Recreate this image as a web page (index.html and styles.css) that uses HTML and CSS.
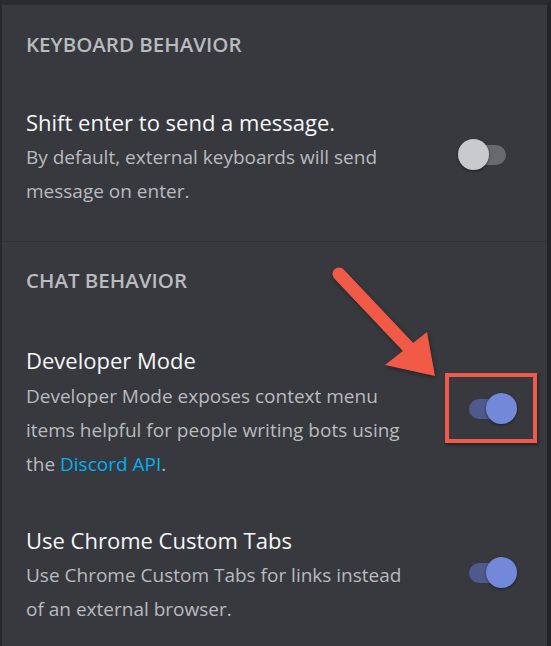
FILE: index.html
```html
<!DOCTYPE html>
<html lang="en">
<head>
  <meta charset="UTF-8">
  <meta name="viewport" content="width=device-width, initial-scale=1.0">
  <title>Behavior Settings</title>
  <link rel="stylesheet" href="styles.css">
</head>
<body>
  <div class="screen">
    <section class="group">
      <h2 class="group-title">KEYBOARD BEHAVIOR</h2>
      <div class="setting">
        <div class="setting-text">
          <h3>Shift enter to send a message.</h3>
          <p>By default, external keyboards will send<br>message on enter.</p>
        </div>
        <div class="toggle toggle-off"><span class="knob"></span></div>
      </div>
    </section>

    <section class="group group-chat">
      <h2 class="group-title">CHAT BEHAVIOR</h2>
      <div class="setting setting-dev">
        <div class="setting-text">
          <h3>Developer Mode</h3>
          <p>Developer Mode exposes context menu<br>items helpful for people writing bots using<br>the <a href="#">Discord API</a>.</p>
        </div>
        <div class="toggle toggle-on"><span class="knob"></span></div>
      </div>
      <div class="setting setting-tabs">
        <div class="setting-text">
          <h3>Use Chrome Custom Tabs</h3>
          <p>Use Chrome Custom Tabs for links instead<br>of an external browser.</p>
        </div>
        <div class="toggle toggle-on"><span class="knob"></span></div>
      </div>
    </section>

    <svg class="arrow" width="120" height="120" viewBox="0 0 120 120">
      <line x1="12" y1="12" x2="82" y2="86" stroke="#f25a48" stroke-width="13" stroke-linecap="round"/>
      <polygon points="108,114 58,103 100,70" fill="#f25a48"/>
    </svg>
    <div class="highlight"></div>
  </div>
</body>
</html>
```

FILE: styles.css
```css
body {
  margin: 0;
  background-color: #37393f;
  font-family: 'Open Sans', sans-serif;
}

.screen {
  position: relative;
  height: 646px;
  box-sizing: border-box;
  border-top: 5px solid #2b2c31;
  border-left: 2px solid #27282c;
  border-right: 4px solid #232428;
  background-color: #37393f;
  overflow: hidden;
}

.group {
  padding: 27px 0 33px 24px;
}

.group-chat {
  border-top: 1px solid #303237;
  padding-top: 26px;
}

.group-title {
  margin: 0 0 51px;
  font-size: 20.5px;
  line-height: 24px;
  font-weight: 600;
  color: #b9bbbe;
}

.setting {
  display: flex;
  align-items: center;
  justify-content: space-between;
}

.setting h3 {
  margin: 0 0 3px;
  font-size: 22px;
  line-height: 30px;
  font-weight: 400;
  color: #f6f6f7;
}

.setting p {
  margin: 0;
  font-size: 19px;
  line-height: 34px;
  color: #b9bbbe;
}

.setting p a {
  color: #00b0f4;
  text-decoration: none;
}

.setting-dev h3 {
  margin-top: 2px;
  margin-bottom: 4px;
}

.setting-tabs {
  margin-top: 44px;
}

.setting-tabs p {
  margin-top: 3px;
}

.toggle {
  position: relative;
  width: 48px;
  height: 32px;
  margin-top: -6px;
}

.toggle::before {
  content: "";
  position: absolute;
  top: 6px;
  height: 20px;
  width: 40px;
  border-radius: 10px;
}

.knob {
  position: absolute;
  top: 0;
  width: 31px;
  height: 31px;
  border-radius: 50%;
  box-shadow: 0 1px 3px rgba(0, 0, 0, 0.45);
}

.toggle-off {
  margin-right: 41px;
}

.toggle-off::before {
  right: 0;
  background-color: #67696f;
}

.toggle-off .knob {
  left: 0;
  background-color: #c9cacd;
}

.toggle-on {
  margin-right: 30px;
}

.toggle-on::before {
  left: 0;
  background-color: #4f5a8c;
}

.toggle-on .knob {
  right: 0;
  background-color: #7289da;
}

.arrow {
  position: absolute;
  left: 325px;
  top: 257px;
  filter: drop-shadow(1px 2px 2px rgba(0, 0, 0, 0.35));
}

.highlight {
  position: absolute;
  left: 443px;
  top: 368px;
  width: 84px;
  height: 62px;
  border: 4px solid #ee5a4c;
  box-shadow: 1px 2px 3px rgba(0, 0, 0, 0.4);
}
```
